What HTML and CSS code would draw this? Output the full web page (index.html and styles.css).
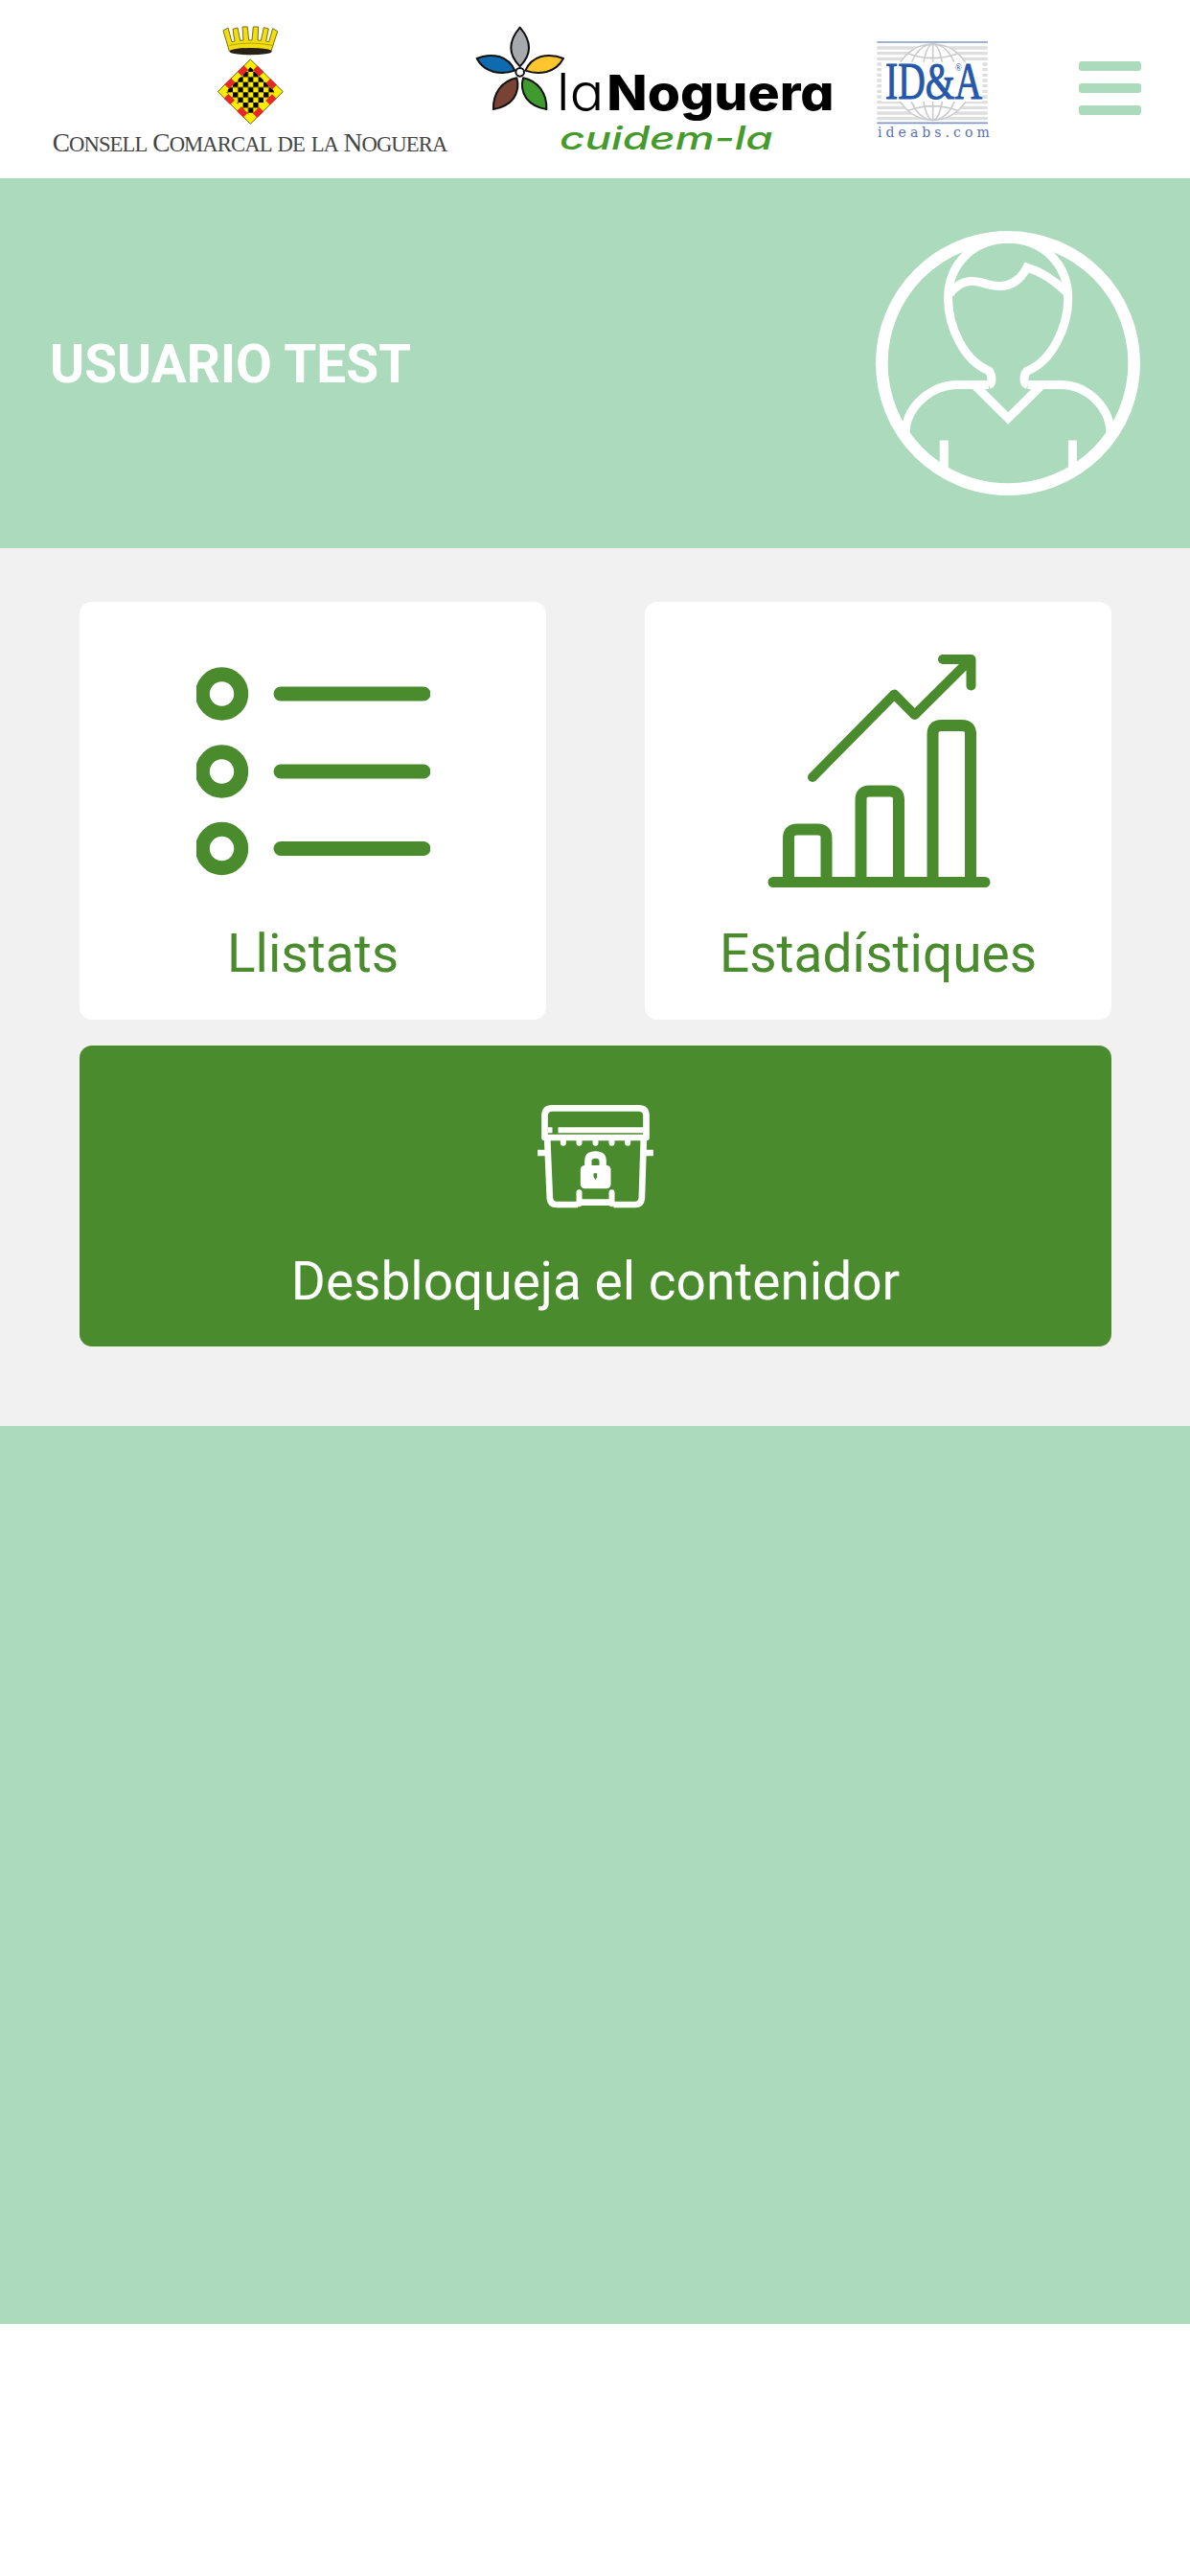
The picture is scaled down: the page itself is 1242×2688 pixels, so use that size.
FILE: index.html
```html
<!DOCTYPE html>
<html lang="ca">
<head>
    <meta charset="utf-8">
    <title>La Noguera</title>
    <link rel="stylesheet" href="styles.css">
</head>
<body>
    <header class="header">
        <!-- Consell Comarcal -->
        <svg class="logo-consell" viewBox="36 0 1260 498">
            <defs>
                <pattern id="checks" width="32" height="32" x="609" y="195" patternUnits="userSpaceOnUse">
                    <rect width="32" height="32" fill="#ffed00"/>
                    <rect width="16" height="16"/>
                    <rect x="16" y="16" width="16" height="16"/>
                </pattern>
            </defs>
            <path d="M598 130L579 66l15-9 12 44 9-2-6-38 15-4 8 40 10-1-3-42h16l4 42h10l4-42h16l-2 42 10 1 9-41 15 4-8 39 9 2 12-42 15 9-20 62z" fill="#f2dc12" stroke="#77700f" stroke-width="3"/>
            <path d="M598 112q66-14 134 0" fill="none" stroke="#b5a510" stroke-width="3"/>
            <ellipse cx="665" cy="131" rx="66" ry="11" fill="#262114"/>
            <path d="M664 156l102 101-102 101-102-101z" fill="#ffed00" stroke="#66601c" stroke-width="3"/>
            <path d="M664 180l77 77-77 77-77-77z" fill="url(#checks)"/>
            <path d="M664 168l90 89-90 89-90-89z" fill="none" stroke="#e52a25" stroke-width="20" stroke-dasharray="0 21 28 29 28 21"/>
            <text class="consell-text" x="44" y="444" textLength="1238"><tspan class="cap">C</tspan>ONSELL <tspan class="cap">C</tspan>OMARCAL DE LA <tspan class="cap">N</tspan>OGUERA</text>
        </svg>

        <!-- laNoguera cuidem-la -->
        <svg class="logo-noguera" viewBox="36 0 1140 498">
            <g stroke="#111" stroke-width="6" stroke-linejoin="round">
                <path d="M188 56q56 66 0 122q-56-56 0-122z" fill="#a7a9ac"/>
                <path d="M53 153q34-14 70-6q34 10 49 44q-32 12-66 4q-36-10-53-42z" fill="#0f6bb0"/>
                <path d="M324 153q-34-14-70-6q-34 10-49 44q32 12 66 4q36-10 53-42z" fill="#fdc62f"/>
                <path d="M178 214q10 34-10 64q-22 28-63 34q-2-36 18-64q22-28 55-34z" fill="#7a4234"/>
                <path d="M198 214q-10 34 10 64q22 28 63 34q2-36-18-64q-22-28-55-34z" fill="#3f9a2f"/>
                <circle cx="188" cy="196" r="13" fill="#fff"/>
            </g>
            <text class="la" x="302" y="315" textLength="150" lengthAdjust="spacingAndGlyphs">la</text>
            <text class="noguera" x="460" y="315" textLength="712" lengthAdjust="spacingAndGlyphs">Noguera</text>
            <text class="cuidem" x="312" y="438" textLength="668" lengthAdjust="spacingAndGlyphs">cuidem-la</text>
        </svg>

        <!-- ID&A -->
        <svg class="logo-ida" viewBox="90 -30 384 498">
            <path d="M106 90h346M106 107h346M106 124h346M106 141h346M106 158h346M106 175h346M106 192h346M106 209h346M106 226h346M106 243h346M106 260h346M106 277h346M106 294h346M106 311h346" stroke="#dedede" stroke-width="10"/>
            <circle cx="281" cy="197" r="121" fill="#fff"/>
            <g fill="none" stroke="#cbcbcb" stroke-width="5">
                <circle cx="281" cy="197" r="119"/>
                <ellipse cx="281" cy="197" rx="78" ry="119"/>
                <ellipse cx="281" cy="197" rx="34" ry="119"/>
                <path d="M281 78v238M204 108q77 28 154 0M204 286q77-28 154 0"/>
            </g>
            <path d="M120 134h316v124H120z" fill="#fff"/>
            <path d="M106 72h347M106 325h347" stroke="#8296ca" stroke-width="5"/>
            <text class="ida" x="132" y="249" textLength="303" lengthAdjust="spacingAndGlyphs">ID&amp;A</text>
            <text class="reg" x="350" y="163">®</text>
            <text class="ideabs" x="108" y="369" textLength="350">ideabs.com</text>
        </svg>

        <button class="menu-button" aria-label="Menú">
            <span></span>
            <span></span>
            <span></span>
        </button>
    </header>

    <section class="profile">
        <h1>USUARIO TEST</h1>
        <svg class="avatar" viewBox="72 63 829 829">
            <g fill="none" stroke="#fff" stroke-width="27">
                <circle cx="486.500" cy="477.500" r="395.500" stroke-width="38"/>
                <path d="M427 545C440 540 436 510 426 501C350 470 299 365 299 275C299 165 380 88 487 88C594 88 675 165 675 275C675 365 624 470 548 501C536 510 532 540 548 545"/>
                <path d="M427 545H330C245 545 165 615 165 700M548 545H650C735 545 808 615 808 700"/>
                <path d="M384 548L487 650L590 548M286 719V815M689 719V815"/>
                <path d="M304 260C345 205 390 220 425 231C480 245 520 228 546 177C590 190 635 220 674 258"/>
            </g>
        </svg>
    </section>

    <main class="menu">
        <a class="card">
            <svg class="card-icon" viewBox="0 0 244 244">
                <g fill="none" stroke="#4a8b2d" stroke-width="15">
                    <circle cx="26.500" cy="41" r="20.200"/>
                    <circle cx="26.500" cy="122" r="20.200"/>
                    <circle cx="26.500" cy="202.500" r="20.200"/>
                    <path d="M88 41h149M88 122h149M88 202.500h149" stroke-linecap="round"/>
                </g>
            </svg>
            <span>Llistats</span>
        </a>
        <a class="card">
            <svg class="card-icon" viewBox="0 0 244 244">
                <g fill="none" stroke="#4a8b2d" stroke-width="12" stroke-linecap="round" stroke-linejoin="round">
                    <path d="M12 237.500h221" stroke-width="11"/>
                    <path d="M28 237v-45.500q0-9 9-9h21.500q9 0 9 9V237"/>
                    <path d="M103.500 237v-85.500q0-9 9-9H134q9 0 9 9V237"/>
                    <path d="M178.500 237V83q0-9 9-9H209q9 0 9 9v154"/>
                    <path d="M53 128l85.400-86.500L159.700 63 217 6M189 5h29.500v27.500" stroke-width="10"/>
                </g>
            </svg>
            <span>Estadístiques</span>
        </a>
        <a class="card card-wide">
            <svg class="bin-icon" viewBox="62 97 362 330">
                <g fill="none" stroke="#fff" stroke-width="20" stroke-linejoin="round">
                    <path d="M84 202V134q0-24 24-24H378q24 0 24 24V202z"/>
                    <path d="M94 179h14M126 179H394" stroke-width="18"/>
                    <path d="M92 204l8 188q2 20 22 20h66M394 204l-6 188q-2 20-22 20h-66"/>
                    <path d="M62 250h26M398 250h26"/>
                    <path d="M142 208v11M192 208v11M243 208v11M294 208v11M344 208v11M192 374v36M294 374v36" stroke-width="18" stroke-linecap="round"/>
                    <path d="M190 405h106"/>
                    <path d="M220 296v-20q0-20 23-20t23 20v20" stroke-width="22"/>
                </g>
                <rect x="196" y="289" width="95" height="73" rx="14" fill="#fff"/>
                <path d="M237 314h11v12l-5 8-6-9z" fill="#4a8b2d"/>
            </svg>
            <span>Desbloqueja el contenidor</span>
        </a>
    </main>

    <div class="background"></div>
</body>
</html>
```

FILE: styles.css
```css
* {
    box-sizing: border-box;
}

body {
    margin: 0;
    font-family: Roboto, sans-serif;
    font-size: 55px;
    background-color: white;
}

.header {
    display: flex;
    align-items: center;
    height: 186px;
    padding: 0 51px 0 52px;
}

.header svg {
    height: 166px;
    flex: none;
}

.logo-consell {
    width: 420px;
}

.logo-noguera {
    width: 380px;
    margin-left: 20px;
}

.logo-ida {
    width: 128px;
    margin-left: 38px;
}

.consell-text {
    font-family: "Liberation Serif", serif;
    font-size: 68px;
    word-spacing: 6px;
    fill: #444;
}

.consell-text .cap {
    font-size: 82px;
}

.la {
    font-family: Inter, sans-serif;
    font-size: 160px;
    font-weight: 300;
    font-feature-settings: "cv11";
}

.noguera {
    font-family: Inter, sans-serif;
    font-size: 154px;
    font-weight: 800;
    font-feature-settings: "cv11";
}

.cuidem {
    font-family: Inter, sans-serif;
    font-size: 100px;
    font-style: italic;
    font-weight: 500;
    font-feature-settings: "cv11";
    fill: #459a2c;
}

.ida {
    font-family: "Liberation Serif", serif;
    font-size: 164px;
    fill: #2557ab;
    stroke: #2557ab;
    stroke-width: 3px;
}

.reg {
    font-family: "Liberation Serif", serif;
    font-size: 28px;
    fill: #2557ab;
}

.ideabs {
    font-family: "DejaVu Serif", serif;
    font-size: 42px;
    fill: #5872b8;
}

.menu-button {
    display: flex;
    flex-direction: column;
    gap: 13px;
    margin: -2px 0 0 auto;
    padding: 0;
    border: none;
    background: none;
}

.menu-button span {
    width: 65px;
    height: 10px;
    border-radius: 3px;
    background-color: #abdabc;
}

.profile {
    display: flex;
    align-items: center;
    justify-content: space-between;
    height: 386px;
    padding: 0 52px;
    background-color: #abdabc;
    color: white;
}

.profile h1 {
    margin: 2px 0 0;
    font-size: 55px;
    font-weight: bold;
}

.avatar {
    width: 276px;
    height: 276px;
}

.menu {
    display: grid;
    grid-template-columns: 487px 487px;
    grid-template-rows: 436px 314px;
    justify-content: space-between;
    row-gap: 27px;
    height: 916px;
    padding: 56px 82px 82px 83px;
    background-color: #f1f1f1;
}

.card {
    display: flex;
    flex-direction: column;
    align-items: center;
    padding-top: 55px;
    border-radius: 13px;
    background-color: white;
    color: #4a8b2d;
    line-height: 62px;
}

.card-icon {
    width: 244px;
    height: 244px;
    margin-bottom: 37px;
}

.card-wide {
    grid-column: span 2;
    padding-top: 61px;
    background-color: #4a8b2d;
    color: white;
}

.bin-icon {
    width: 121px;
    height: 110px;
    margin-bottom: 44px;
}

.background {
    height: 937px;
    background-color: #abdabc;
}
```
